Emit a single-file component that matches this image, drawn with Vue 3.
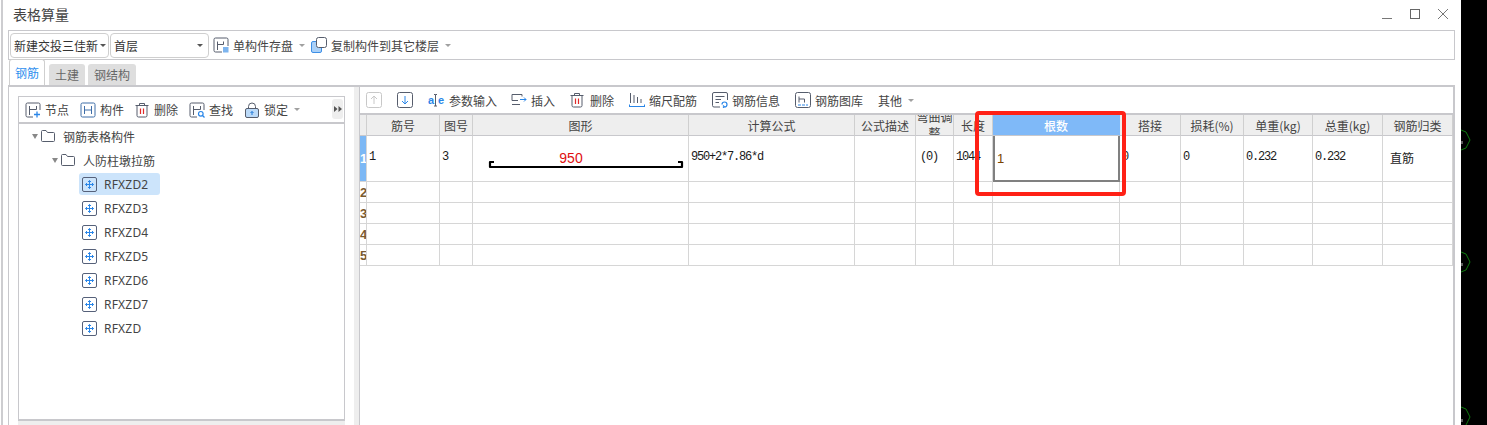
<script setup>
const heads = ['', '筋号', '图号', '图形', '计算公式', '公式描述', '弯曲调整', '长度', '根数', '搭接', '损耗(%)', '单重(kg)', '总重(kg)', '钢筋归类']
const emptyRows = ['2', '3', '4', '5']
const trees = ['RFXZD2', 'RFXZD3', 'RFXZD4', 'RFXZD5', 'RFXZD6', 'RFXZD7', 'RFXZD']
</script>

<template>
  <div class="app">
    <div class="win">
      <div class="win-inner">
        <header class="titlebar">
          <span class="title">表格算量</span>
          <div class="controls">
            <svg width="12" height="12" viewBox="0 0 12 12"><path d="M1 10.5H11" stroke="#777" fill="none"/></svg>
            <svg width="12" height="12" viewBox="0 0 12 12"><rect x="1.5" y="1.5" width="9" height="9" stroke="#666" fill="none"/></svg>
            <svg width="12" height="12" viewBox="0 0 12 12"><path d="M1 1L11 11M11 1L1 11" stroke="#777" fill="none"/></svg>
          </div>
        </header>

        <div class="topbar">
          <div class="combo combo-a"><span>新建交投三佳新</span><i class="caret dark"></i></div>
          <div class="combo combo-b"><span>首层</span><i class="caret dark"></i></div>
          <div class="tool first">
            <svg width="16" height="16" viewBox="0 0 16 16" fill="none"><path d="M9 15H2.5A1.5 1.5 0 0 1 1 13.500V2.500A1.500 1.500 0 0 1 2.500 1H13.500A1.500 1.500 0 0 1 15 2.500V9" stroke="#565d6c"/><path d="M4.500 13V4.500M4.500 7.500H10.500V4.500" stroke="#565d6c"/><rect x="10" y="10" width="5.500" height="5.500" fill="#7db4ee"/></svg>
            <span>单构件存盘</span><i class="caret"></i>
          </div>
          <div class="tool second">
            <svg width="16" height="16" viewBox="0 0 16 16" fill="none"><rect x="0.500" y="4.500" width="10" height="11" rx="1.500" fill="#a9d0f8" stroke="#3d8fe6"/><rect x="5.500" y="0.500" width="10" height="10" rx="2" fill="#fff" stroke="#565d6c"/></svg>
            <span>复制构件到其它楼层</span><i class="caret"></i>
          </div>
        </div>

        <nav class="tabs">
          <span class="tab active">钢筋</span>
          <span class="tab">土建</span>
          <span class="tab">钢结构</span>
        </nav>

        <section class="panel">
          <aside class="left">
            <div class="leftbox">
              <div class="ltools">
                <div class="tool">
                  <svg width="16" height="16" viewBox="0 0 16 16" fill="none"><path d="M8 15H2.500A1.500 1.500 0 0 1 1 13.500V2.500A1.500 1.500 0 0 1 2.500 1H13.500A1.500 1.500 0 0 1 15 2.500V8" stroke="#565d6c"/><path d="M4.500 13V4M11.500 4V7.500M4.500 7.500H11.500" stroke="#565d6c"/><path d="M12 9.500V15.500M9 12.500H15" stroke="#2a86e8" stroke-width="1.300"/></svg>
                  <span>节点</span>
                </div>
                <div class="tool">
                  <svg width="16" height="16" viewBox="0 0 16 16" fill="none"><rect x="1" y="1" width="14" height="14" rx="1.500" stroke="#3f6ea8"/><path d="M4.500 4V12M11.500 4V12M4.500 8H11.500" stroke="#3f6ea8"/></svg>
                  <span>构件</span>
                </div>
                <div class="tool trash">
                  <svg width="14" height="16" viewBox="0 0 14 16" fill="none"><path d="M2 4V13.500A1.500 1.500 0 0 0 3.500 15H10.500A1.500 1.500 0 0 0 12 13.500V4M0.500 3.500H13.500M4.500 3.500V1.500H9.500V3.500" stroke="#565d6c"/><path d="M5.500 6.500V12M8.500 6.500V12" stroke="#e02a2a" stroke-width="1.200"/></svg>
                  <span>删除</span>
                </div>
                <div class="tool">
                  <svg width="16" height="16" viewBox="0 0 16 16" fill="none"><path d="M8 15H2.500A1.500 1.500 0 0 1 1 13.500V2.500A1.500 1.500 0 0 1 2.500 1H13.500A1.500 1.500 0 0 1 15 2.500V8" stroke="#565d6c"/><path d="M4.500 13V4M11.500 4V7.500M4.500 7.500H11.500" stroke="#565d6c"/><circle cx="11.800" cy="11.800" r="2.300" stroke="#2a86e8" stroke-width="1.200"/><path d="M13.500 13.500L15.500 15.500" stroke="#2a86e8" stroke-width="1.200"/></svg>
                  <span>查找</span>
                </div>
                <div class="tool">
                  <svg width="16" height="16" viewBox="0 0 16 16" fill="none"><path d="M4.500 7V4.500A3.500 3.500 0 0 1 11.500 4.500V7" stroke="#565d6c"/><rect x="1.500" y="6.500" width="13" height="9" rx="1.500" fill="#bcdaf8" stroke="#565d6c"/><path d="M8 9.500V13M6.500 11L8 9.500L9.500 11" stroke="#1f78d8"/></svg>
                  <span>锁定</span><i class="caret"></i>
                </div>
                <button class="more" type="button">
                  <svg width="8" height="6" viewBox="0 0 8 6"><path d="M0 0L3.500 3L0 6ZM4.500 0L8 3L4.500 6Z" fill="#555"/></svg>
                </button>
              </div>
              <div class="tree">
                <div class="node lvl0">
                  <i class="caret tree-caret"></i>
                  <svg width="14" height="12" viewBox="0 0 14 12" fill="none"><path d="M0.500 10V1.500A1 1 0 0 1 1.500 0.500H5L6.500 2.500H12.500A1 1 0 0 1 13.500 3.500V10.500A1 1 0 0 1 12.500 11.500H1.500A1 1 0 0 1 0.500 10.500Z" stroke="#565d6c"/></svg>
                  <span class="lbl">钢筋表格构件</span>
                </div>
                <div class="node lvl1">
                  <i class="caret tree-caret"></i>
                  <svg width="14" height="12" viewBox="0 0 14 12" fill="none"><path d="M0.500 10V1.500A1 1 0 0 1 1.500 0.500H5L6.500 2.500H12.500A1 1 0 0 1 13.500 3.500V10.500A1 1 0 0 1 12.500 11.500H1.500A1 1 0 0 1 0.500 10.500Z" stroke="#565d6c"/></svg>
                  <span class="lbl">人防柱墩拉筋</span>
                </div>
                <div v-for="(t, i) in trees" :key="t" class="leaf" :class="{ sel: i === 0 }">
                  <svg width="15" height="15" viewBox="0 0 15 15" fill="none"><rect x="0.500" y="0.500" width="14" height="14" rx="1.500" stroke="#56617a"/><path d="M7.500 3.500V11.500M3.500 7.500H11.500M6 5L7.500 3.500L9 5M6 10L7.500 11.500L9 10M5 6L3.500 7.500L5 9M10 6L11.500 7.500L10 9" stroke="#2a86e8"/></svg>
                  <span>{{ t }}</span>
                </div>
              </div>
            </div>
            <div class="hscroll"></div>
          </aside>
          <div class="splitter"></div>

          <main class="right">
            <div class="rtools">
              <div class="tool">
                <svg width="16" height="16" viewBox="0 0 16 16" fill="none"><rect x="0.500" y="0.500" width="15" height="15" rx="2" stroke="#c8c8c8"/><path d="M8 12V4M5 7L8 4L11 7" stroke="#c8c8c8"/></svg>
              </div>
              <div class="tool">
                <svg width="16" height="16" viewBox="0 0 16 16" fill="none"><rect x="0.500" y="0.500" width="15" height="15" rx="2" stroke="#565d6c"/><path d="M8 4V12M5 9L8 12L11 9" stroke="#2a86e8"/></svg>
              </div>
              <div class="tool aje">
                <svg width="17" height="16" viewBox="0 0 17 16" fill="none">
                  <text x="0" y="12" class="ae">a</text>
                  <text x="10" y="12" class="ae">e</text>
                  <path d="M6 2.500H7.500V14M9 2.500H7.500M6 14H9" stroke="#565d6c"/>
                </svg>
                <span>参数输入</span>
              </div>
              <div class="tool">
                <svg width="16" height="16" viewBox="0 0 16 16" fill="none"><path d="M11 4.500V2.500H1V8.500H7M1 12.500H9" stroke="#565d6c"/><path d="M9 7.500H15M13 5.500L15 7.500L13 9.500" stroke="#2a86e8"/></svg>
                <span>插入</span>
              </div>
              <div class="tool trash">
                <svg width="14" height="16" viewBox="0 0 14 16" fill="none"><path d="M2 4V13.500A1.500 1.500 0 0 0 3.500 15H10.500A1.500 1.500 0 0 0 12 13.500V4M0.500 3.500H13.500M4.500 3.500V1.500H9.500V3.500" stroke="#565d6c"/><path d="M5.500 6.500V12M8.500 6.500V12" stroke="#e02a2a" stroke-width="1.200"/></svg>
                <span>删除</span>
              </div>
              <div class="tool">
                <svg width="16" height="16" viewBox="0 0 16 16" fill="none"><path d="M1.500 1V11M5 3V11M8.500 5V11M12 7V11" stroke="#565d6c"/><path d="M0.500 14.500H15.500M0.500 12.500V15M15.500 12.500V15" stroke="#2a86e8"/></svg>
                <span>缩尺配筋</span>
              </div>
              <div class="tool">
                <svg width="16" height="16" viewBox="0 0 16 16" fill="none"><path d="M8 15H2A1.500 1.500 0 0 1 0.500 13.500V2A1.500 1.500 0 0 1 2 0.500H14A1.500 1.500 0 0 1 15.500 2V8M3.500 4.500H12.500M3.500 7.500H9M3.500 10.500H7" stroke="#565d6c"/><path d="M10 12.500A2.500 2.500 0 1 1 12.500 15M12.500 15L11 13.500M12.500 15L11 16" stroke="#2a86e8" stroke-width="1.200"/></svg>
                <span>钢筋信息</span>
              </div>
              <div class="tool">
                <svg width="16" height="16" viewBox="0 0 16 16" fill="none"><rect x="0.500" y="0.500" width="15" height="15" rx="2" stroke="#565d6c"/><path d="M4 10.500V4.500M4 7H9.500V10.500" stroke="#565d6c"/><path d="M3 13H13" stroke="#2a86e8" stroke-dasharray="3 1"/></svg>
                <span>钢筋图库</span>
              </div>
              <div class="tool">
                <span>其他</span><i class="caret"></i>
              </div>
            </div>

            <div class="grid">
              <div class="row head">
                <div v-for="(h, i) in heads" :key="i" class="cell hc" :class="{ focus: h === '根数', wrap: h === '弯曲调整' }">{{ h }}</div>
              </div>
              <div class="row row1">
                <div class="cell rownum on">1</div>
                <div class="cell mono">1</div>
                <div class="cell mono">3</div>
                <div class="cell shape">
                  <svg width="215" height="45" viewBox="0 0 215 45" fill="none">
                    <text x="98" y="27" text-anchor="middle" class="dim">950</text>
                    <path d="M21 26H17V31H209V26H205" stroke="#000" stroke-width="2.200" stroke-linejoin="round"/>
                  </svg>
                </div>
                <div class="cell mono">950+2*7.86*d</div>
                <div class="cell"></div>
                <div class="cell mono centered">(0)</div>
                <div class="cell mono">1044</div>
                <div class="cell editing">1</div>
                <div class="cell mono">0</div>
                <div class="cell mono">0</div>
                <div class="cell mono">0.232</div>
                <div class="cell mono">0.232</div>
                <div class="cell kind">直筋</div>
              </div>
              <div v-for="r in emptyRows" :key="r" class="row rowx">
                <div class="cell rownum">{{ r }}</div>
                <div v-for="n in 13" :key="n" class="cell"></div>
              </div>
            </div>
          </main>
        </section>
      </div>
    </div>

    <svg class="desk" width="26" height="425" viewBox="0 0 26 425" fill="none">
      <path d="M0 130L5 132L9 140L5 148L0 150" stroke="#0c7a0c"/>
      <path d="M0 252L5 254L9 262L5 270L0 272" stroke="#0c7a0c"/>
      <path d="M0 407L5 409L9 417L5 425" stroke="#0c7a0c"/>
      <path d="M1 141V144M1 263V266M1 419V422" stroke="#bbb"/>
    </svg>

    <div class="callout"></div>
  </div>
</template>

<style scoped>
.app {
  position: relative;
  display: flex;
  width: 1487px;
  height: 425px;
  overflow: hidden;
  background: #000;
  font-family: "Noto Sans CJK SC", "Noto Sans", sans-serif;
  font-size: 12px;
  color: #444;
}
.win {
  width: 1461px;
  flex: none;
  padding-left: 1px;
  background: #fff;
  box-sizing: border-box;
}
.win-inner {
  height: 100%;
  border-left: 2px solid #cdcdd0;
  box-sizing: border-box;
}
.desk { flex: none; }

.titlebar {
  display: flex;
  align-items: center;
  justify-content: space-between;
  height: 30px;
  padding: 0 12px 0 10px;
}
.title { font-size: 14px; color: #444; line-height: 28px; margin-bottom: 2px; }
.controls { display: flex; gap: 16px; margin-bottom: 3px; }

.topbar {
  display: flex;
  align-items: center;
  width: 1447px;
  height: 30px;
  margin-left: 5px;
  padding-left: 1px;
  border: 1px solid #c8c8cc;
  box-sizing: border-box;
}
.combo {
  display: flex;
  align-items: center;
  justify-content: space-between;
  height: 25px;
  border: 1px solid #cfcfcf;
  border-radius: 4px;
  box-sizing: border-box;
  padding: 0 2px 0 3px;
  color: #333;
}
.combo-a { width: 99px; }
.combo-b { width: 99px; margin-left: 1px; padding-right: 5px; }
.caret {
  display: inline-block;
  width: 0;
  height: 0;
  border-left: 3px solid transparent;
  border-right: 3px solid transparent;
  border-top: 3px solid #a0a0a0;
}
.caret.dark { border-top-color: #555; }
.tool {
  display: flex;
  align-items: center;
  gap: 4px;
  flex: none;
  color: #444;
}
.tool .caret { margin-left: 2px; }
.tool.trash { gap: 5px; }
.rtools .tool.trash { gap: 6px; }
.tool.aje { margin-right: -1px; }
.first { margin-left: 4px; }
.second { margin-left: 6px; }
.ae { font-family: "Liberation Sans", sans-serif; font-size: 11px; font-weight: 700; fill: #2a86e8; }

.tabs {
  display: flex;
  align-items: flex-end;
  height: 25px;
  margin-left: 6px;
  gap: 3px;
}
.tab {
  display: flex;
  align-items: center;
  justify-content: center;
  height: 21px;
  padding: 0 6px;
  background: #dedede;
  border-radius: 3px 3px 0 0;
  color: #666;
}
.tab.active {
  height: 26px;
  padding: 0 5px;
  margin-right: 1px;
  background: #fff;
  border: 1px solid #cfcfcf;
  border-bottom: none;
  box-sizing: border-box;
  color: #2f8fee;
  position: relative;
  z-index: 1;
}

.panel {
  display: flex;
  width: 1447px;
  height: 340px;
  margin-left: 5px;
  border-top: 2px solid #c8c8cc;
  border-left: 1px solid #c8c8cc;
  border-right: 2px solid #c8c8cc;
  box-sizing: border-box;
}
.left {
  width: 336px;
  flex: none;
  padding: 9px 0 0 9px;
  box-sizing: border-box;
}
.leftbox {
  width: 327px;
  height: 325px;
  border: 1px solid #c8c8cc;
  border-bottom-width: 2px;
  box-sizing: border-box;
}
.hscroll { width: 327px; height: 5px; background: #eee; }
.ltools {
  position: relative;
  display: flex;
  align-items: center;
  gap: 11px;
  height: 25px;
  padding-left: 6px;
  border-bottom: 2px solid #c8c8cc;
}
.more {
  position: absolute;
  right: 1px;
  top: 2px;
  width: 11px;
  height: 20px;
  padding: 0;
  display: flex;
  align-items: center;
  justify-content: center;
  border: none;
  border-radius: 3px;
  background: #eee;
}
.tree { color: #444; }
.node, .leaf { display: flex; align-items: center; height: 24px; }
.lvl0 { padding-left: 13px; }
.lvl1 { padding-left: 33px; }
.tree-caret {
  border-left-width: 3.5px;
  border-right-width: 3.5px;
  border-top: 5px solid #888;
  margin-right: 3px;
}
.lbl { margin-left: 8px; }
.leaf {
  margin-left: 60px;
  width: 81px;
  gap: 7px;
  padding-left: 3px;
  box-sizing: border-box;
  font-family: "Noto Sans", sans-serif;
  letter-spacing: 0.2px;
}
.leaf.sel { background: #cce4fb; border-radius: 3px; height: 22px; margin: 1px 0 1px 60px; }

.splitter {
  width: 15px;
  flex: none;
  box-sizing: border-box;
  border-left: 9px solid #fff;
  background: #eee;
  border-right: 1px solid #c8c8cc;
}
.right { flex: 1; min-width: 0; }
.rtools {
  display: flex;
  align-items: center;
  gap: 15px;
  height: 26px;
  padding-left: 6px;
}

.grid { border-top: 2px solid #c8c8cc; }
.row {
  display: grid;
  grid-template-columns: 7px 73px 33px 216px 166px 61px 38px 39px 127px 61px 63px 69px 70px 70px;
}
.cell {
  border-right: 1px solid #d6d6d6;
  border-bottom: 1px solid #d6d6d6;
  box-sizing: border-box;
  overflow: hidden;
  white-space: nowrap;
  display: flex;
  align-items: center;
}
.head { height: 21px; }
.row1 { height: 46px; }
.rowx { height: 21px; }
.hc {
  justify-content: center;
  background: #eee;
  color: #444;
  border-bottom-color: #c8c8cc;
  border-right-color: #cfcfcf;
}
.hc.focus { background: #7fb9f8; color: #fff; font-weight: 500; border-right-color: #7fb9f8; }
.hc.wrap {
  white-space: normal;
  line-height: 16px;
  text-align: center;
}
.rownum {
  justify-content: flex-start;
  background: #fff;
  color: #7a5a30;
  font-weight: 700;
  font-size: 13px;
  font-family: "Liberation Sans", sans-serif;
}
.rownum.on { background: #7cb8f5; color: #fff; }
.mono {
  font-family: "Liberation Mono", "DejaVu Sans Mono", monospace;
  font-size: 12px;
  letter-spacing: -1.2px;
  color: #1a1a1a;
  padding-left: 2px;
  padding-bottom: 3px;
}
.centered { padding-left: 4px; }
.shape svg { display: block; flex: none; }
.dim { font-family: "Liberation Sans", sans-serif; font-size: 14px; fill: #e01010; }
.editing {
  border: 2px solid #808080;
  border-top: none;
  padding-left: 2px;
  color: #7a4300;
  font-family: "Liberation Sans", sans-serif;
  font-size: 13px;
}
.kind { color: #222; padding: 0 0 3px 7px; }

.callout {
  position: absolute;
  left: 975px;
  top: 111px;
  width: 151px;
  height: 85px;
  box-sizing: border-box;
  border: 4px solid #ff2116;
  border-radius: 4px;
  pointer-events: none;
}
</style>
